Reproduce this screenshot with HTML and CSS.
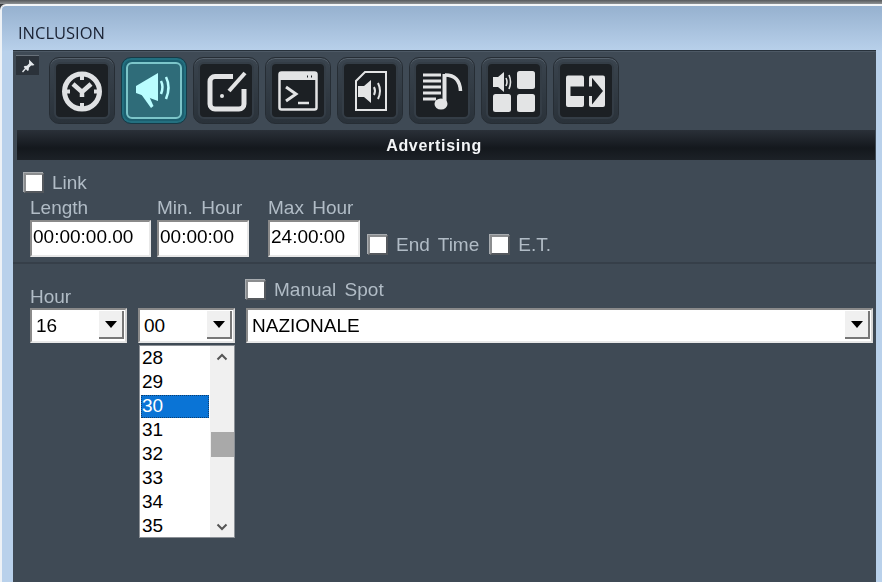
FILE: index.html
```html
<!DOCTYPE html>
<html lang="en">
<head>
<meta charset="utf-8">
<title>INCLUSION</title>
<link rel="stylesheet" href="styles.css">
</head>
<body>
<div class="topline"></div>
<div class="window">
  <div class="title">INCLUSION</div>
  <div class="panel">
    <div class="toolbar">
      <div class="pin">
        <svg viewBox="0 0 16 16" width="16" height="16"><path d="M9 1.500l5.500 5.500-1.600.6-1.800 0-2.200 2.200-.2 2.400-1 .8-4-4 .8-1 2.400-.2 2.200-2.200 0-1.800z" fill="#e4e8ec"/><path d="M6 10l-3.500 4" stroke="#e4e8ec" stroke-width="1.400"/></svg>
      </div>
      <div class="tools">
        <div class="tool"><div class="tool-in">
          <svg class="ico" viewBox="0 0 48 48"><circle cx="24" cy="24.500" r="17.500" fill="none" stroke="#dfe1e3" stroke-width="5"/><path d="M24 8v5M24 36v5M7 24.500h5M36 24.500h5" stroke="#dfe1e3" stroke-width="4"/><path d="M15 17l9 8 9-8M24 25v5" fill="none" stroke="#dfe1e3" stroke-width="4.500"/></svg>
        </div></div>
        <div class="tool active"><div class="tool-in">
          <svg class="ico" viewBox="0 0 48 48"><path d="M6 19L28 6v28L6 26z" fill="#b9fdff"/><path d="M11 27l10 14 2.500-2-5-11z" fill="#b9fdff"/><path d="M31 14q3 6 0 13M36 10q5 10 0 22" fill="none" stroke="#b9fdff" stroke-width="2.500"/></svg>
        </div></div>
        <div class="tool"><div class="tool-in">
          <svg class="ico" viewBox="0 0 48 48"><path d="M31 9.500H13a5 5 0 0 0-5 5V37a5 5 0 0 0 5 5h24a5 5 0 0 0 5-5V22" fill="none" stroke="#e3e4e5" stroke-width="5"/><path d="M43 6L27 24" stroke="#e3e4e5" stroke-width="4"/><circle cx="20" cy="29" r="2" fill="#e3e4e5"/></svg>
        </div></div>
        <div class="tool"><div class="tool-in">
          <svg class="ico" viewBox="0 0 48 48"><rect x="5.500" y="5.500" width="37" height="37" rx="2" fill="none" stroke="#e3e4e5" stroke-width="2.500"/><path d="M5.500 6h37v7h-37z" fill="#e3e4e5"/><path d="M33 9.500h1M37 9.500h1" stroke="#1c2024" stroke-width="2"/><path d="M12 20l10 7-10 7" fill="none" stroke="#e3e4e5" stroke-width="3"/><path d="M24 36h11" stroke="#e3e4e5" stroke-width="2.500"/></svg>
        </div></div>
        <div class="tool"><div class="tool-in">
          <svg class="ico" viewBox="0 0 48 48"><path d="M19 5h21v38H10V14z" fill="none" stroke="#e3e4e5" stroke-width="2"/><path d="M12 19h6l7-6v23l-7-6h-6z" fill="#e3e4e5"/><path d="M28 20q2 4 0 8M32 16q4 8 0 16" fill="none" stroke="#e3e4e5" stroke-width="2"/></svg>
        </div></div>
        <div class="tool"><div class="tool-in">
          <svg class="ico" viewBox="0 0 48 48"><path d="M5 8h18M5 14h18M5 20h18M5 26h18M5 32h13" stroke="#e3e4e5" stroke-width="3"/><path d="M26.500 7v31" stroke="#e3e4e5" stroke-width="4"/><ellipse cx="23" cy="37" rx="6.500" ry="5.500" fill="#e3e4e5"/><path d="M27 8c9 0 15 5 15.500 16" fill="none" stroke="#e3e4e5" stroke-width="3.500"/></svg>
        </div></div>
        <div class="tool"><div class="tool-in">
          <svg class="ico" viewBox="0 0 48 48"><path d="M3 10h5l6-5v20l-6-5H3z" fill="#e3e4e5"/><path d="M16 11q2 4 0 8M19 8q3 7 0 14" fill="none" stroke="#e3e4e5" stroke-width="1.600"/><rect x="27" y="4" width="18" height="18" rx="2.500" fill="#e3e4e5"/><rect x="3" y="27" width="18" height="18" rx="2.500" fill="#e3e4e5"/><rect x="27" y="27" width="18" height="18" rx="2.500" fill="#e3e4e5"/></svg>
        </div></div>
        <div class="tool"><div class="tool-in">
          <svg class="ico" viewBox="0 0 48 48"><rect x="4" y="8.500" width="18" height="31.500" rx="2" fill="#e3e4e5"/><rect x="27" y="8.500" width="16" height="31.500" rx="2" fill="#e3e4e5"/><path d="M8.500 19.500H30v-8.700L41 24 30 37.500V29H8.500z" fill="#1c2024"/></svg>
        </div></div>
      </div>
    </div>
    <div class="heading">Advertising</div>
    <section class="sec-times">
      <label class="check"><span class="box"></span>Link</label>
      <div class="fields">
        <div class="field">
          <div class="lbl">Length</div>
          <div class="input w-len">00:00:00.00</div>
        </div>
        <div class="field">
          <div class="lbl">Min. Hour</div>
          <div class="input w-hour">00:00:00</div>
        </div>
        <div class="field gap-max">
          <div class="lbl">Max Hour</div>
          <div class="input w-hour">24:00:00</div>
        </div>
        <label class="check end-time"><span class="box"></span>End Time</label>
        <label class="check et"><span class="box"></span>E.T.</label>
      </div>
    </section>
    <section class="sec-spot">
      <div class="col">
        <div class="lbl hour-lbl">Hour</div>
        <div class="combo"><span class="val">16</span><span class="drop"><i class="tri"></i></span></div>
      </div>
      <div class="col">
        <div class="combo"><span class="val">00</span><span class="drop"><i class="tri"></i></span></div>
        <div class="list">
          <ul class="items">
            <li>28</li><li>29</li><li class="sel">30</li><li>31</li><li>32</li><li>33</li><li>34</li><li>35</li>
          </ul>
          <div class="sb">
            <svg class="sb-arrow" viewBox="0 0 12 8" width="12" height="8"><path d="M1.500 6.500L6 2l4.500 4.500" fill="none" stroke="#555" stroke-width="2"/></svg>
            <div class="thumb"></div>
            <svg class="sb-arrow" viewBox="0 0 12 8" width="12" height="8"><path d="M1.500 1.500L6 6l4.500-4.500" fill="none" stroke="#555" stroke-width="2"/></svg>
          </div>
        </div>
      </div>
      <div class="col grow">
        <label class="check manual"><span class="box"></span>Manual Spot</label>
        <div class="combo full"><span class="val">NAZIONALE</span><span class="drop"><i class="tri"></i></span></div>
      </div>
    </section>
  </div>
</div>
</body>
</html>
```
FILE: styles.css
```css
* { box-sizing: border-box; }
html, body { margin: 0; height: 100%; overflow: hidden; }
body {
  background: #3c3f42;
  font-family: "Liberation Sans", Arial, sans-serif;
  font-size: 19px;
  display: flex;
  flex-direction: column;
  filter: blur(.35px);
}
.topline {
  height: 4px;
  background: linear-gradient(#55585b, #8f9294);
  flex: none;
}
.window {
  flex: 1;
  display: flex;
  flex-direction: column;
  padding: 0 6px 0 11px;
  border-top: 2px solid #f4f6f8;
  border-left: 2px solid #eef2f6;
  border-top-left-radius: 6px;
  background: linear-gradient(#96b1cf 0, #b9d1eb 46px, #b9d1eb 100%);
}
.title {
  height: 44px;
  flex: none;
  padding: 17px 0 0 5px;
  font-family: "Open Sans", "Liberation Sans", sans-serif;
  font-size: 16.500px;
  line-height: 20px;
  color: #1a2233;
}
.panel {
  flex: 1;
  background: #3f4a55;
  border-top: 1px solid #27313b;
  box-shadow: inset 0 1px 0 #4d5965;
  color: #b1bcc6;
  word-spacing: 3px;
}
.toolbar {
  display: flex;
  align-items: flex-start;
  height: 79px;
  padding: 4px 0 0 3px;
}
.pin {
  width: 23px;
  height: 20px;
  background: #2b323a;
  border-top: 1px solid #68717a;
  display: flex;
  align-items: center;
  justify-content: center;
  flex: none;
}
.tools {
  display: flex;
  gap: 6px;
  margin: 2px 0 0 10px;
}
.tool {
  width: 66px;
  height: 67px;
  padding: 4px;
  border-radius: 10px;
  background: linear-gradient(#3a444e, #2a323a);
  border: 1px solid #262d34;
  box-shadow: inset 0 1px 0 #56616c;
}
.tool-in {
  width: 100%;
  height: 100%;
  display: flex;
  align-items: center;
  justify-content: center;
  border-radius: 6px;
  background: #1c2024;
  border: 2px solid #343d46;
}
.ico { width: 48px; height: 48px; flex: none; }
.tool.active {
  background: #1c5f6f;
  border-color: #173a46;
  box-shadow: inset 0 0 0 2px #237080;
}
.active .tool-in {
  background: #2f6c79;
  border-color: #7cc5c9;
}
.heading {
  height: 30px;
  margin: 0 1px 0 4px;
  padding: 1px 24px 0 0;
  background: linear-gradient(#2a3038, #14181d 60%, #1c2127);
  color: #f3f5f7;
  font-size: 16px;
  font-weight: bold;
  line-height: 30px;
  text-align: center;
  letter-spacing: .7px;
}
.check {
  display: flex;
  align-items: center;
  gap: 8px;
  line-height: 24px;
  height: 20px;
}
.box {
  width: 20px;
  height: 20px;
  flex: none;
  background: #fff;
  border: 2px solid;
  border-color: #8b8d8f #55595e #55595e #8b8d8f;
  box-shadow: -1px -1px 0 #a8acb0;
}
.sec-times {
  height: 104px;
  padding: 13px 0 0 11px;
  border-bottom: 2px solid #363f49;
}
.fields {
  display: flex;
  align-items: flex-end;
  margin: 4px 0 0 6px;
}
.field { margin-right: 6px; }
.gap-max { margin-left: 13px; margin-right: 8px; }
.lbl { height: 23px; line-height: 21px; }
.input {
  height: 37px;
  padding-left: 1px;
  background: #fff;
  color: #000;
  line-height: 30px;
  border: 2px solid;
  border-color: #8a8a8a #e8e8e8 #e8e8e8 #8a8a8a;
  white-space: nowrap;
}
.w-len { width: 121px; }
.w-hour { width: 92px; }
.end-time { margin-bottom: 2px; }
.et { margin: 0 0 2px 11px; }
.sec-spot {
  display: flex;
  align-items: flex-end;
  gap: 11px;
  padding: 16px 3px 0 17px;
}
.col { position: relative; width: 97px; flex: none; }
.col.grow { flex: 1; width: auto; }
.hour-lbl { height: 21px; line-height: 21px; margin-bottom: 1px; }
.manual { margin-bottom: 8px; }
.combo {
  display: flex;
  height: 35px;
  background: #fff;
  color: #000;
  border: 2px solid;
  border-color: #8a8a8a #d8d8d8 #e8e8e8 #8a8a8a;
  padding: 1px 1px 2px 4px;
  align-items: stretch;
}
.val { flex: 1; line-height: 30px; }
.drop {
  width: 25px;
  flex: none;
  background: #f0f0f0;
  border-right: 2px solid #777;
  border-bottom: 2px solid #777;
  display: flex;
  align-items: center;
  justify-content: center;
}
.tri {
  width: 0;
  height: 0;
  border: 6px solid transparent;
  border-top: 7px solid #000;
  border-bottom: 0;
}
.list {
  position: absolute;
  top: 37px;
  left: 1px;
  width: 96px;
  height: 193px;
  background: #fff;
  border: 1px solid #8b9096;
  display: flex;
  color: #000;
}
.items {
  list-style: none;
  margin: 0;
  padding: 1px 0 0 1px;
  flex: 1;
  font-size: 19px;
}
.items li {
  height: 24px;
  line-height: 22px;
  padding-left: 1px;
}
.items li.sel {
  height: 23px;
  background: #0a74d6;
  color: #fff;
  outline: 1px dotted #0c3f70;
  outline-offset: -1px;
  margin-bottom: 1px;
}
.sb {
  width: 24px;
  flex: none;
  margin-left: 1px;
  background: #f0f0f0;
  display: flex;
  flex-direction: column;
  align-items: center;
}
.sb-arrow { margin-top: 7px; }
.sb-arrow:last-child { margin-top: 66px; }
.thumb {
  width: 23px;
  height: 25px;
  margin-top: 71px;
  background: #a9a9a9;
}
```
